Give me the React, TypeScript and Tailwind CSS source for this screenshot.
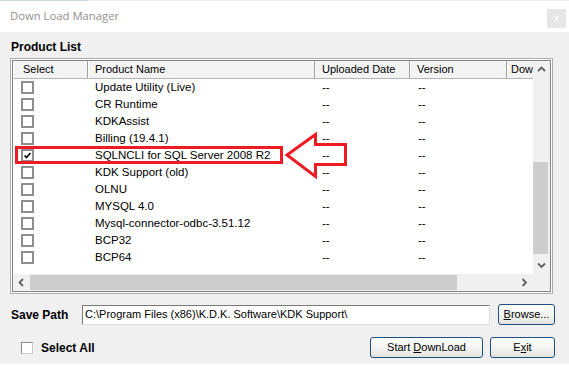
import React from "react";

const products = [
  { name: "Update Utility (Live)", checked: false },
  { name: "CR Runtime", checked: false },
  { name: "KDKAssist", checked: false },
  { name: "Billing (19.4.1)", checked: false },
  { name: "SQLNCLI for SQL Server 2008 R2", checked: true },
  { name: "KDK Support (old)", checked: false },
  { name: "OLNU", checked: false },
  { name: "MYSQL 4.0", checked: false },
  { name: "Mysql-connector-odbc-3.51.12", checked: false },
  { name: "BCP32", checked: false },
  { name: "BCP64", checked: false },
];

const ListCheck = ({ checked }: { checked: boolean }) => (
  <div className="w-[13px] h-[13px] border-2 border-[#8e8e8e] bg-white flex items-center justify-center">
    {checked && (
      <svg width="9" height="9" viewBox="0 0 9 9">
        <path d="M1.5 4.5 L3.5 6.5 L7.5 2" fill="none" stroke="#000" strokeWidth="1.6" />
      </svg>
    )}
  </div>
);

// small scrollbar chevron, rotated per direction
const Chevron = ({ dir }: { dir: "up" | "down" | "left" | "right" }) => {
  const pts = {
    up: "1,5 4.5,1.5 8,5",
    down: "1,1.5 4.5,5 8,1.5",
    left: "5,1 1.5,4.5 5,8",
    right: "1.5,1 5,4.5 1.5,8",
  }[dir];
  const size = dir === "up" || dir === "down" ? { w: 9, h: 7 } : { w: 7, h: 9 };
  return (
    <svg width={size.w} height={size.h} viewBox={`0 0 ${size.w} ${size.h}`}>
      <polyline points={pts} fill="none" stroke="#606060" strokeWidth="1.8" />
    </svg>
  );
};

const HeaderCell = ({ label, width, pad = "pl-[6px]" }: { label: string; width: string; pad?: string }) => (
  <div className={`${width} ${pad} shrink-0 h-full flex items-center border-r border-[#a0a0a0] border-l border-l-white whitespace-nowrap overflow-hidden`}>
    {label}
  </div>
);

const XpButton = ({ children, width }: { children: React.ReactNode; width: string }) => (
  <button className={`${width} h-[21px] rounded-[3px] border border-[#1c4f80] bg-linear-to-b from-white via-[#f4f4f2] to-[#e3e3de] text-[11px] text-black flex items-center justify-center`}>
    <span className="whitespace-pre">{children}</span>
  </button>
);

export default function App() {
  return (
    <div className="relative w-[569px] h-[366px] overflow-hidden bg-white font-['Liberation_Sans',Arial,sans-serif] text-[11px] text-black">
      <div className="flex h-px">
        <div className="w-[88px] bg-[#c9d5e3]" />
        <div className="flex-1 bg-[#ececec]" />
      </div>

      {/* title bar */}
      <div className="flex h-[31px] items-start justify-between pl-[10px] pr-[3px]">
        <span className="mt-[7px] leading-[16px] font-['Open_Sans',sans-serif] text-[11.3px] text-[#909090]">
          Down Load Manager
        </span>
        <div className="mt-[8px] w-[19px] h-[19px] bg-[#e6e6e6] flex items-center justify-center text-white text-[10px] leading-none">
          x
        </div>
      </div>

      {/* window body */}
      <div className="h-[332px] bg-[#f0f0f0] pl-[10px] pr-[14px] pt-[7px]">
        <div className="leading-[16px] text-[12px] font-bold pl-px">Product List</div>

        <div className="mt-[3px] w-[543px] h-[236px] border border-[#adadad] bg-white p-px">
          <div className="w-full h-full border border-[#828282] grid grid-cols-[520px_17px] grid-rows-[213px_17px]">
            {/* list content */}
            <div className="overflow-hidden bg-white">
              <div className="flex h-[18px] bg-[#f3f3f3] border-b border-[#b5b5b5]">
                <HeaderCell label="Select" width="w-[75px]" pad="pl-[9px]" />
                <HeaderCell label="Product Name" width="w-[227px]" />
                <HeaderCell label="Uploaded Date" width="w-[95px]" />
                <HeaderCell label="Version" width="w-[97px]" />
                <HeaderCell label="Download" width="w-[60px]" pad="pl-[3px]" />
              </div>
              {products.map((p) => (
                <div key={p.name} className="flex h-[17px] items-center whitespace-nowrap text-[11.5px]">
                  <div className="w-[75px] shrink-0 pl-[8px]">
                    <ListCheck checked={p.checked} />
                  </div>
                  <div className="w-[227px] shrink-0 pl-[7px]">{p.name}</div>
                  <div className="w-[95px] shrink-0 pl-[7px]">--</div>
                  <div className="w-[97px] shrink-0 pl-[8px]">--</div>
                </div>
              ))}
            </div>

            {/* vertical scrollbar */}
            <div className="bg-[#f0f0f0] flex flex-col">
              <div className="h-[17px] flex items-center justify-center">
                <Chevron dir="up" />
              </div>
              <div className="h-[84px]" />
              <div className="h-[92px] w-[15px] bg-[#cdcdcd]" />
              <div className="flex-1" />
              <div className="h-[17px] flex items-center justify-center">
                <Chevron dir="down" />
              </div>
            </div>

            {/* horizontal scrollbar */}
            <div className="bg-[#f0f0f0] flex items-center">
              <div className="w-[17px] h-full flex items-center justify-center">
                <Chevron dir="left" />
              </div>
              <div className="w-[427px] h-[15px] bg-[#cdcdcd]" />
              <div className="flex-1" />
              <div className="w-[17px] h-full flex items-center justify-center">
                <Chevron dir="right" />
              </div>
            </div>
            <div className="bg-[#f0f0f0]" />
          </div>
        </div>

        {/* save path */}
        <div className="mt-[10px] flex items-center h-[21px]">
          <span className="w-[72px] pl-px text-[12px] font-bold">Save Path</span>
          <div className="w-[408px] h-[20px] bg-white border border-t-[#7a7a7a] border-l-[#7a7a7a] border-r-[#dcdcdc] border-b-[#dcdcdc] flex items-center pl-[2px] whitespace-nowrap">
            C:\Program Files (x86)\K.D.K. Software\KDK Support\
          </div>
          <div className="ml-[8px]">
            <XpButton width="w-[57px]">
              <span className="underline">B</span>rowse...
            </XpButton>
          </div>
        </div>

        {/* bottom actions */}
        <div className="mt-[12px] flex items-center h-[21px]">
          <div className="ml-[11px] w-[12px] h-[12px] bg-white border border-t-[#8a8a8a] border-l-[#8a8a8a] border-r-[#c8c8c8] border-b-[#c8c8c8]" />
          <span className="ml-[8px] text-[12px] font-bold">Select All</span>
          <div className="ml-auto flex gap-[7px]">
            <XpButton width="w-[113px]">
              {"Start "}
              <span className="underline">D</span>ownLoad
            </XpButton>
            <XpButton width="w-[65px]">
              E<span className="underline">x</span>it
            </XpButton>
          </div>
        </div>
      </div>

      {/* red annotation drawn over the list */}
      <svg className="absolute inset-0 pointer-events-none" width="569" height="366">
        <rect x="16.5" y="147.5" width="265" height="15" fill="none" stroke="#ed1c24" strokeWidth="3" />
        <polygon
          points="287,155 315.5,134.5 315.5,144.5 345.5,144.5 345.5,164.5 315.5,164.5 315.5,176.5"
          fill="none"
          stroke="#ed1c24"
          strokeWidth="3"
          strokeLinejoin="miter"
        />
      </svg>
    </div>
  );
}
